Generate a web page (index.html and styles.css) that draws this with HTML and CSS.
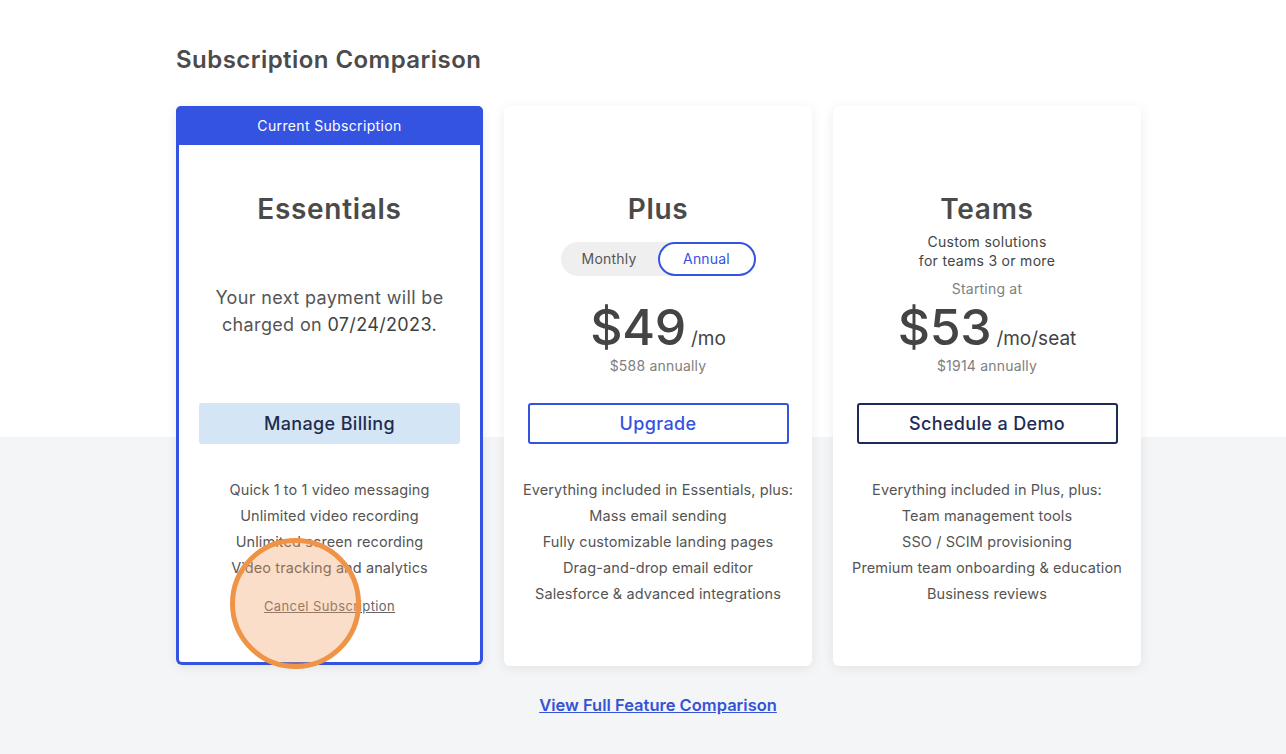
FILE: index.html
```html
<!DOCTYPE html>
<html lang="en">
<head>
<meta charset="utf-8">
<title>Subscription Comparison</title>
<link rel="stylesheet" href="styles.css">
</head>
<body>
<main class="page">
  <h1 class="page-title">Subscription Comparison</h1>
  <div class="cards">
    <section class="card card-current">
      <div class="card-band">Current Subscription</div>
      <div class="card-top">
        <h2 class="plan-name">Essentials</h2>
        <p class="next-payment">Your next payment will be<br>charged on <span class="date">07/24/2023.</span></p>
      </div>
      <button class="btn btn-billing">Manage Billing</button>
      <ul class="features">
        <li>Quick 1 to 1 video messaging</li>
        <li>Unlimited video recording</li>
        <li>Unlimited screen recording</li>
        <li>Video tracking and analytics</li>
      </ul>
      <a class="cancel-link" href="#">Cancel Subscription</a>
      <span class="click-marker"></span>
    </section>

    <section class="card">
      <div class="card-band card-band-empty"></div>
      <div class="card-top">
        <h2 class="plan-name">Plus</h2>
        <div class="toggle">
          <span class="toggle-opt">Monthly</span>
          <span class="toggle-opt toggle-active">Annual</span>
        </div>
        <div class="price"><span class="amount">$49</span><span class="unit">/mo</span></div>
        <div class="annual">$588 annually</div>
      </div>
      <button class="btn btn-upgrade">Upgrade</button>
      <ul class="features">
        <li>Everything included in Essentials, plus:</li>
        <li>Mass email sending</li>
        <li>Fully customizable landing pages</li>
        <li>Drag-and-drop email editor</li>
        <li>Salesforce &amp; advanced integrations</li>
      </ul>
    </section>

    <section class="card">
      <div class="card-band card-band-empty"></div>
      <div class="card-top">
        <h2 class="plan-name">Teams</h2>
        <p class="plan-sub">Custom solutions<br>for teams 3 or more</p>
        <div class="starting">Starting at</div>
        <div class="price price-teams"><span class="amount">$53</span><span class="unit">/mo/seat</span></div>
        <div class="annual">$1914 annually</div>
      </div>
      <button class="btn btn-demo">Schedule a Demo</button>
      <ul class="features">
        <li>Everything included in Plus, plus:</li>
        <li>Team management tools</li>
        <li>SSO / SCIM provisioning</li>
        <li>Premium team onboarding &amp; education</li>
        <li>Business reviews</li>
      </ul>
    </section>
  </div>
  <div class="footer-link-row">
    <a class="full-compare" href="#">View Full Feature Comparison</a>
  </div>
</main>
</body>
</html>
```

FILE: styles.css
```css
* { box-sizing: border-box; }

html, body {
  margin: 0;
  padding: 0;
}

body {
  font-family: Inter, "Noto Sans", "Liberation Sans", sans-serif;
  color: #4a4a4a;
  background: linear-gradient(to bottom, #ffffff 0, #ffffff 437px, #f4f5f6 437px, #f4f5f6 100%);
  min-height: 754px;
}

.page {
  padding: 43px 0 0 176px;
  width: 1286px;
}

.page-title {
  margin: 0;
  font-size: 24px;
  line-height: 34px;
  font-weight: 600;
  color: #4b4b4b;
  letter-spacing: 0.45px;
}

.cards {
  display: grid;
  grid-template-columns: 307px 308px 308px;
  column-gap: 21px;
  margin-top: 29px;
}

.card {
  position: relative;
  background: #ffffff;
  border-radius: 6px;
  box-shadow: 0 2px 12px rgba(0, 0, 0, 0.08);
  height: 560px;
  display: flex;
  flex-direction: column;
  align-items: center;
  text-align: center;
}

.card-current {
  border: 3px solid #3453e1;
  border-top: none;
  height: 559px;
}

.card-band {
  align-self: stretch;
  height: 39px;
  background: #3453e1;
  color: #ffffff;
  font-size: 14px;
  line-height: 40px;
  letter-spacing: 0.35px;
  border-radius: 5px 5px 0 0;
  margin: 0 -3px;
}

.card-band-empty {
  background: transparent;
  margin: 0;
}

.card-top {
  height: 258px;
  display: flex;
  flex-direction: column;
  align-items: center;
}

.plan-name {
  margin: 47px 0 0;
  font-size: 28px;
  line-height: 34px;
  font-weight: 600;
  color: #4a4a4a;
  letter-spacing: 0.7px;
}

.next-payment {
  margin: 58px 0 0;
  font-size: 18px;
  line-height: 27px;
  color: #555555;
  letter-spacing: 0.35px;
}

.next-payment .date {
  color: #3f3f3f;
  font-weight: 400;
}

.toggle {
  margin-top: 16px;
  display: flex;
  width: 195px;
  height: 34px;
  border-radius: 17px;
  background: #efefef;
}

.toggle-opt {
  flex: 1;
  font-size: 14px;
  line-height: 34px;
  color: #555555;
  border-radius: 17px;
  letter-spacing: 0.2px;
}

.toggle-active {
  flex: 0 0 98px;
  background: #ffffff;
  border: 2px solid #3453e1;
  line-height: 30px;
  color: #3453e1;
}

.price {
  margin-top: 23px;
  display: flex;
  align-items: baseline;
  justify-content: center;
  height: 56px;
}

.price-teams {
  margin-top: 0;
}

.amount {
  font-size: 50px;
  line-height: 56px;
  color: #444444;
  font-weight: 500;
  letter-spacing: -0.3px;
}

.unit {
  font-size: 19px;
  color: #444444;
  margin-left: 5px;
}

.annual {
  margin-top: 1px;
  font-size: 14px;
  line-height: 20px;
  color: #808080;
  letter-spacing: 0.2px;
}

.plan-sub {
  margin: 6px 0 0;
  font-size: 14px;
  line-height: 19px;
  color: #444444;
  font-weight: 400;
  letter-spacing: 0.3px;
}

.starting {
  margin-top: 9px;
  font-size: 14px;
  line-height: 20px;
  color: #808080;
  letter-spacing: 0.2px;
}

.btn {
  width: 261px;
  height: 41px;
  border-radius: 3px;
  font-family: inherit;
  font-size: 18px;
  font-weight: 500;
  letter-spacing: 0.35px;
  padding: 0;
  cursor: pointer;
}

.btn-billing {
  background: #d4e6f5;
  border: none;
  color: #1f2c4e;
}

.btn-upgrade {
  background: #ffffff;
  border: 2px solid #3453e1;
  color: #3453e1;
}

.btn-demo {
  background: #ffffff;
  border: 2px solid #1e2b58;
  color: #1e2b58;
}

.features {
  list-style: none;
  margin: 33px 0 0;
  padding: 0;
  font-size: 14.5px;
  line-height: 26px;
  color: #555555;
  letter-spacing: 0.1px;
}

.cancel-link {
  margin-top: 16px;
  font-size: 13px;
  line-height: 18px;
  color: #666666;
  text-decoration: underline;
  letter-spacing: 0.4px;
}

.click-marker {
  position: absolute;
  left: 51px;
  top: 432px;
  width: 131px;
  height: 131px;
  border-radius: 50%;
  border: 5px solid #ef9447;
  background: rgba(243, 160, 100, 0.35);
  pointer-events: none;
}

.footer-link-row {
  width: 964px;
  text-align: center;
  margin-top: 27px;
}

.full-compare {
  font-size: 16.5px;
  line-height: 24px;
  font-weight: 600;
  color: #3453d6;
  text-decoration: underline;
}
```
